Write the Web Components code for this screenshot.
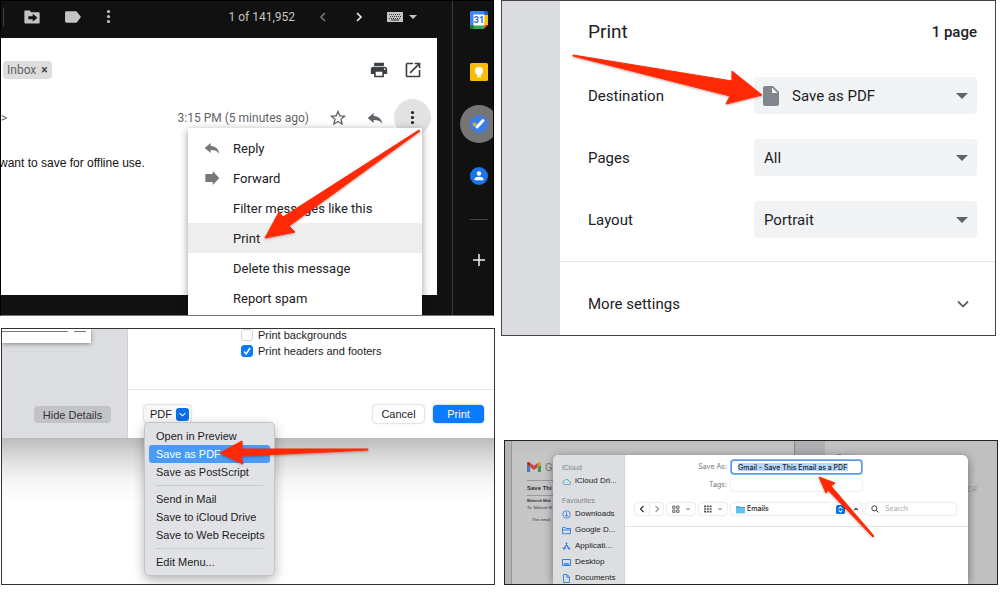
<!DOCTYPE html>
<html lang="en">
<head>
<meta charset="utf-8">
<title>Save a Gmail message as PDF</title>
<style>
body { margin: 0; background: #fff; font-family: Roboto, "Liberation Sans", sans-serif; }
</style>
</head>
<body>
<step-collage>
  <gmail-step slot="left"></gmail-step>
  <mac-print-step slot="left"></mac-print-step>
  <chrome-print-step slot="right"></chrome-print-step>
  <save-dialog-step slot="right"></save-dialog-step>
</step-collage>

<script>
const RESET = `
  :host { box-sizing: border-box; }
  *, *::before, *::after { box-sizing: border-box; }
  button { font: inherit; color: inherit; background: none; border: 0; padding: 0; margin: 0; display: inline-flex; align-items: center; }
  h2, h3, p, ul { margin: 0; padding: 0; font: inherit; list-style: none; }
`;
function define(tag, html, ready) {
  const template = document.createElement('template');
  template.innerHTML = `<style>${RESET}</style>` + html;
  customElements.define(tag, class extends HTMLElement {
    constructor() {
      super();
      this.attachShadow({ mode: 'open' }).append(template.content.cloneNode(true));
    }
    connectedCallback() { if (ready) ready(this, this.shadowRoot); }
  });
}

/* Icons: [viewBox, markup] */
const ICONS = {
  moveTo: ['1 1 22 22', '<path fill="currentColor" fill-rule="evenodd" d="M2.500 3H9l2 2.500h10A1.500 1.500 0 0 1 22.500 7v12.500A1.500 1.500 0 0 1 21 21H3a1.500 1.500 0 0 1-1.500-1.500V4a1 1 0 0 1 1-1zM13 18.500l6.500-5.500L13 7.500V11H7v4h6z"/>'],
  label: ['0 0 24 24', '<path fill="currentColor" d="M2 3.500h14.500c.700 0 1.300.300 1.700.900l5.700 7.600-5.700 7.600c-.400.600-1 .900-1.700.900H2c-1 0-1.900-.800-1.900-1.800V5.300C.1 4.300 1 3.500 2 3.500z"/>'],
  dots: ['0 0 8 24', '<g fill="currentColor"><circle cx="4" cy="4" r="2.500"/><circle cx="4" cy="12" r="2.500"/><circle cx="4" cy="20" r="2.500"/></g>'],
  left: ['0 0 16 16', '<path fill="none" stroke="currentColor" stroke-width="1.600" d="M10 4 6 8l4 4"/>'],
  right: ['0 0 16 16', '<path fill="none" stroke="currentColor" stroke-width="1.600" d="m6 4 4 4-4 4"/>'],
  down: ['0 0 16 16', '<path fill="none" stroke="currentColor" stroke-width="1.800" d="m3 5.500 5 5 5-5"/>'],
  up: ['0 0 16 16', '<path fill="none" stroke="currentColor" stroke-width="3" d="m3 11 5-5 5 5"/>'],
  keyboard: ['0 0 16 10', '<rect width="16" height="10" rx=".5" fill="currentColor"/><path stroke="#333" stroke-width="1" stroke-dasharray="1 1" d="M2 2.500h12M3 4.500h11M2 6.500h12"/><path stroke="#333" d="M4 8h8"/>'],
  caret: ['0 0 12 6', '<path fill="currentColor" d="M0 0h12L6 6z"/>'],
  printer: ['1 1 22 22', '<path fill="currentColor" d="M19 8H5c-1.660 0-3 1.340-3 3v6h4v4h12v-4h4v-6c0-1.660-1.340-3-3-3zm-3 11H8v-5h8v5zm3-7c-.550 0-1-.450-1-1s.450-1 1-1 1 .450 1 1-.450 1-1 1zm-1-9H6v4h12V3z"/>'],
  open: ['1 1 22 22', '<path fill="currentColor" d="M19 19H5V5h7V3H5a2 2 0 0 0-2 2v14a2 2 0 0 0 2 2h14c1.100 0 2-.900 2-2v-7h-2v7zM14 3v2h3.590l-9.830 9.830 1.410 1.410L19 6.410V10h2V3h-7z"/>'],
  star: ['1 1 22 22', '<path fill="currentColor" d="m22 9.240-7.190-.620L12 2 9.190 8.630 2 9.240l5.460 4.730L5.820 21 12 17.270 18.180 21l-1.630-7.030L22 9.240zM12 15.400l-3.760 2.270 1-4.280-3.320-2.880 4.380-.380L12 6.100l1.710 4.040 4.380.380-3.320 2.880 1 4.280L12 15.400z"/>'],
  reply: ['0 0 24 24', '<path fill="currentColor" d="M10 9V4.500L1 12l9 7.500V15c6 0 10 1.500 13 5.500C22 14 18 9.500 10 9z"/>'],
  forward: ['0 0 24 24', '<path fill="currentColor" d="M2 6h11V1.500L23 12 13 22.500V18H2z"/>'],
  plus: ['0 0 12 12', '<path stroke="currentColor" stroke-width="1.500" d="M6 0v12M0 6h12"/>'],
  calendar: ['0 0 18 18', '<path fill="#4285f4" d="M1.500 0H14v4H4v10H0V1.500A1.500 1.500 0 0 1 1.500 0z"/><path fill="#1967d2" d="M14 0h2.500A1.500 1.500 0 0 1 18 1.500V4h-4z"/><path fill="#fbbc04" d="M14 4h4v10h-4z"/><path fill="#34a853" d="M4 14h10v4H4z"/><path fill="#188038" d="M0 14h4v4H1.500A1.500 1.500 0 0 1 0 16.500z"/><path fill="#ea4335" d="M14 14h4l-4 4z"/><path fill="#fff" d="M3.500 3.500h11v11h-11z"/>'],
  keep: ['0 0 18 18', '<rect width="18" height="18" rx="1.500" fill="#fbbc04"/><circle cx="9" cy="8" r="4" fill="#fff"/><path fill="#fff" d="M7 11h4v1.500H7zM7 13h4v1.200H7z"/>'],
  tasks: ['0 0 18 18', '<circle cx="9" cy="9" r="9" fill="#3d7de8"/><path stroke="#fff" stroke-width="3" stroke-linecap="round" fill="none" d="m7 12 6-6.500"/><circle cx="4.500" cy="9.500" r="1.900" fill="#c9b34a"/>'],
  contacts: ['0 0 18 18', '<circle cx="9" cy="9" r="9" fill="#1a73e8"/><circle cx="9" cy="6.500" r="2.200" fill="#fff"/><path fill="#fff" d="M4.500 13.200v-1.200c0-1.500 2.500-2.300 4.500-2.300s4.500.800 4.500 2.300v1.200z"/>'],
  file: ['0 0 16 20', '<path fill="#80868b" fill-rule="evenodd" d="M2 0h8l6 6v12a2 2 0 0 1-2 2H2a2 2 0 0 1-2-2V2a2 2 0 0 1 2-2zm7 1.500V7h5.500z"/>'],
  gmail: ['0 0 24 18', '<path fill="#4c78c4" d="M1.600 18h3.900V8.700L0 4.600v11.800C0 17.300.700 18 1.600 18z"/><path fill="#3e955c" d="M18.500 18h3.900c.900 0 1.600-.700 1.600-1.600V4.600l-5.500 4.100z"/><path fill="#c8a33a" d="M18.500 1.600v7.100L24 4.600V2.500c0-2-2.300-3.200-3.900-2z"/><path fill="#c4473d" d="M5.500 8.700V1.600L12 6.500l6.500-4.900v7.100L12 13.600z"/><path fill="#a5352d" d="M0 2.500v2.100l5.500 4.100V1.600L3.900.5C2.300-.7 0 .500 0 2.500z"/>'],
  cloud: ['0 0 12 12', '<path fill="none" stroke="#35a0b8" d="M3.500 10a2.500 2.500 0 0 1-.300-4.900 3.200 3.200 0 0 1 6.100.700A2.100 2.100 0 0 1 9.500 10z"/>'],
  download: ['0 0 12 12', '<g fill="none" stroke="#2c7be5" stroke-width="1.100"><circle cx="6" cy="6" r="5"/><path d="M6 3v5.500M3.800 6.500 6 8.700l2.200-2.200"/></g>'],
  folder: ['0 0 12 12', '<path fill="none" stroke="#2c7be5" stroke-width="1.200" d="M.7 10.300V2h3.600l1 1.300h6v7zM.7 5.300h10.600"/>'],
  apps: ['0 0 12 12', '<path fill="none" stroke="#2c7be5" stroke-width="1.500" d="M6.800 1 2.300 10.500M5.200 1l4.500 9.500M.5 8h5M7.500 8h4"/>'],
  desktop: ['0 0 12 12', '<path fill="none" stroke="#2c7be5" stroke-width="1.300" d="M.7 2h10.600v8H.7z"/><path fill="#2c7be5" d="M2.500 7h7v2h-7z"/>'],
  doc: ['0 0 12 12', '<path fill="none" stroke="#2c7be5" stroke-width="1.200" d="M2 .7h4.800L10 4v7.300H2zM6.500 1v3.300H10"/>'],
  grid4: ['0 0 12 12', '<g fill="none" stroke="#555" stroke-width="1.300"><path d="M1 1.500h3.500V5H1zM7 1.500h3.500V5H7zM1 7.500h3.500V11H1zM7 7.500h3.500V11H7z"/></g>'],
  grid9: ['0 0 12 12', '<path stroke="#555" stroke-width="2.600" stroke-dasharray="3 1.200" d="M0 2h12M0 6h12M0 10h12"/>'],
  blueFolder: ['0 0 12 12', '<path fill="#3fa9dd" d="M0 1.500h4.500l1 1.200H12V11H0z"/><path fill="#63c3ee" d="M0 4h12v7H0z"/>'],
  updown: ['0 0 12 12', '<rect width="12" height="12" rx="2.500" fill="#0a6fe8"/><path fill="none" stroke="#fff" stroke-width="1.400" d="M3.500 5 6 2.500 8.500 5M3.500 7 6 9.500 8.500 7"/>'],
  search: ['0 0 12 12', '<path fill="none" stroke="#333" stroke-width="1.400" d="m7.800 7.800 3.500 3.500"/><circle cx="5" cy="5" r="3.800" fill="none" stroke="#333" stroke-width="1.400"/>']
};
define('ui-icon', `<style>:host { display: inline-flex; flex: none; } svg { display: block; width: 100%; }</style>`, (el, root) => {
  const [box, art] = ICONS[el.getAttribute('name')];
  el.style.width = (el.getAttribute('size') || 16) + 'px';
  root.innerHTML += `<svg viewBox="${box}" aria-hidden="true">${art}</svg>`;
});

/* Red annotation arrow, drawn over the panel it belongs to */
define('red-arrow', `<style>:host { position: absolute; z-index: 5; pointer-events: none; } svg { display: block; filter: drop-shadow(0 1px 1px rgba(90,0,0,.35)); }</style>`, (el, root) => {
  const [w, h] = el.getAttribute('box').split(' ');
  root.innerHTML += `<svg width="${w}" height="${h}" viewBox="0 0 ${w} ${h}" aria-hidden="true"><polygon fill="#ff2a05" stroke="#ff2a05" stroke-linejoin="round" points="${el.getAttribute('points')}"/></svg>`;
});

define('step-collage', `<style>
  :host { display: grid; grid-template-columns: 495fr 497fr; column-gap: 6px; padding-right: 2px; }
  .col { display: flex; flex-direction: column; min-width: 0; }
  .left { gap: 12px; }
  .right { gap: 24px; justify-content: space-between; }
</style>
<div class="col left"><slot name="left"></slot></div>
<div class="col right"><slot name="right"></slot></div>`);

define('gmail-step', `<style>
  :host { display: flex; margin-right: 1px; background: #111; border: 1px solid #000; border-bottom-color: #777; overflow: hidden; font-size: 12px; }
  .main { flex: 1; min-width: 0; position: relative; display: flex; flex-direction: column; padding: 0 15px 20px 0; }
  .bar { display: flex; align-items: center; height: 37px; padding: 0 20px 6px 2px; color: #c4c4c4; }
  .tools { display: flex; align-items: center; gap: 25px; border-left: 1px solid #444; padding-left: 20px; height: 18px; flex: 1; }
  .pager { display: flex; align-items: center; gap: 20px; }
  .pager button { gap: 6px; } .dim { color: #777; } .lit { color: #eee; }
  .card { background: #fff; padding: 23px 0 124px; color: #5f6368; }
  .row { display: flex; align-items: center; }
  .top { justify-content: space-between; padding: 0 15px 0 2px; color: #3c4043; }
  .chip { background: #ddd; color: #666; border-radius: 4px; padding: 0 4px; line-height: 18px; gap: 5px; }
  .chip b { color: #444; }
  .acts { display: flex; gap: 16px; }
  .meta { justify-content: space-between; padding: 0 6px 0 0; margin: 20px 0 19px; }
  .meta .row { gap: 20px; }
  .meta .row > :last-child { margin-left: -9px; }
  .more { width: 37px; height: 37px; border-radius: 50%; background: #e2e2e2; justify-content: center; color: #222; }
  .msg { font: 12px/16px "Liberation Sans", sans-serif; color: #111; text-indent: -2px; }
  .menu { position: absolute; right: 30px; top: 127px; width: 234px; padding: 5px 0 7px; background: #fff; color: #202124; font-size: 13px; box-shadow: 0 2px 8px rgba(0,0,0,.4); }
  .menu button { width: 100%; height: 30px; padding-left: 16px; gap: 13px; color: #202124; }
  .menu ui-icon { color: #777; }
  .menu .text { padding-left: 45px; }
  .menu .on { background: #eee; }
  aside { flex: none; display: flex; flex-direction: column; align-items: center; gap: 34px; width: 41px; padding: 10px 5px 0 17px; border-left: 1px solid #3a3a3a; color: #eee; }
  .cal { display: grid; place-items: center; color: #2c6de0; font-size: 9px; font-weight: 700; }
  .cal > * { grid-area: 1 / 1; }
  .tasks { border-radius: 50%; background: #757575; box-shadow: 0 0 0 10px #757575; }
  hr { width: 18px; border: 0; border-top: 1px solid #444; margin: 0; }
</style>
<div class="main">
  <div class="bar">
    <div class="tools">
      <button aria-label="Move to"><ui-icon name="moveTo"></ui-icon></button>
      <button aria-label="Labels"><ui-icon name="label"></ui-icon></button>
      <button aria-label="More"><ui-icon name="dots" size="5"></ui-icon></button>
    </div>
    <div class="pager"><span>1 of 141,952</span>
      <button class="dim" aria-label="Newer"><ui-icon name="left"></ui-icon></button>
      <button class="lit" aria-label="Older"><ui-icon name="right"></ui-icon></button>
      <button aria-label="Input tools"><ui-icon name="keyboard"></ui-icon><ui-icon name="caret" size="8"></ui-icon></button>
    </div>
  </div>
  <div class="card">
    <div class="row top"><button class="chip">Inbox <b>×</b></button>
      <div class="acts"><button aria-label="Print all"><ui-icon name="printer" size="18"></ui-icon></button><button aria-label="In new window"><ui-icon name="open" size="18"></ui-icon></button></div></div>
    <div class="row meta"><span>&gt;</span>
      <div class="row"><span>3:15 PM (5 minutes ago)</span>
        <button aria-label="Star"><ui-icon name="star" size="18"></ui-icon></button>
        <button aria-label="Reply"><ui-icon name="reply"></ui-icon></button>
        <button class="more" aria-label="More options"><ui-icon name="dots" size="5"></ui-icon></button></div></div>
    <p class="msg">want to save for offline use.</p>
  </div>
  <div class="menu">
    <button><ui-icon name="reply"></ui-icon>Reply</button>
    <button><ui-icon name="forward"></ui-icon>Forward</button>
    <button class="text">Filter messages like this</button>
    <button class="text on">Print</button>
    <button class="text">Delete this message</button>
    <button class="text">Report spam</button>
    <red-arrow style="left:72px;top:-3px" box="165 115" points="159,5 23,92 19,87 5,113 35,107 29,101 160,6"></red-arrow>
  </div>
</div>
<aside>
  <button class="cal" aria-label="Calendar"><ui-icon name="calendar" size="18"></ui-icon><span>31</span></button>
  <button aria-label="Keep"><ui-icon name="keep" size="18"></ui-icon></button>
  <button class="tasks" aria-label="Tasks"><ui-icon name="tasks" size="18"></ui-icon></button>
  <button aria-label="Contacts"><ui-icon name="contacts" size="18"></ui-icon></button>
  <hr>
  <button aria-label="Get add-ons"><ui-icon name="plus" size="12"></ui-icon></button>
</aside>`);

define('chrome-print-step', `<style>
  :host { display: grid; grid-template-columns: 58px 1fr; margin-right: 2px; border: 1px solid #444; font-size: 15px; line-height: 20px; color: #202124; background: #fff; }
  .strip { background: #dadce0; }
  .fields { display: flex; flex-direction: column; gap: 25px; padding: 20px 18px 23px 28px; border-bottom: 1px solid #e3e4e6; }
  header { display: flex; justify-content: space-between; align-items: center; line-height: 22px; margin-bottom: 9px; }
  h2 { font-size: 19px; } header b { font-weight: 500; }
  .field { display: flex; justify-content: space-between; align-items: center; }
  .box { position: relative; flex: 0 0 223px; display: flex; align-items: center; }
  select { appearance: none; width: 100%; height: 37px; border: 0; border-radius: 4px; background: #f1f3f4; font: inherit; color: inherit; padding: 0 30px 0 10px; }
  .icon select { padding-left: 38px; }
  .caret { position: absolute; right: 9px; color: #5f6368; }
  .file { position: absolute; left: 9px; }
  .more { display: flex; justify-content: space-between; width: 100%; padding: 32px 24px 21px 28px; color: #202124; }
  .more ui-icon { color: #5f6368; }
</style>
<div class="strip"></div>
<div>
  <div class="fields">
    <header><h2>Print</h2><b>1 page</b></header>
    <div class="field"><label for="dest">Destination</label><div class="box icon"><select id="dest"><option>Save as PDF</option></select><ui-icon class="file" name="file"></ui-icon><ui-icon class="caret" name="caret" size="12"></ui-icon>
      <red-arrow style="left:-186px;top:-28px" box="200 60" points="5,6 164,32 164,22 194,46 158,55 162,47 5,7"></red-arrow></div></div>
    <div class="field"><label for="pages">Pages</label><div class="box"><select id="pages"><option>All</option></select><ui-icon class="caret" name="caret" size="12"></ui-icon></div></div>
    <div class="field"><label for="layout">Layout</label><div class="box"><select id="layout"><option>Portrait</option></select><ui-icon class="caret" name="caret" size="12"></ui-icon></div></div>
  </div>
  <button class="more">More settings <ui-icon name="down"></ui-icon></button>
</div>`);

define('mac-print-step', `<style>
  :host { display: block; margin-left: 1px; border: 1px solid #333; overflow: hidden; font: 11px/16px "Liberation Sans", sans-serif; color: #1c1c1e; background: #fff; }
  .dialog { display: grid; grid-template-columns: 126px 1fr; background: #fff; border-bottom: 1px solid #bbb; }
  .side { display: flex; flex-direction: column; justify-content: space-between; align-items: flex-start; background: #dcdde0; border-right: 1px solid #d0d0d3; padding-bottom: 15px; }
  .paper { width: 89px; height: 14px; background: #fff; box-shadow: 0 1px 4px rgba(0,0,0,.4); }
  .paper i { display: block; height: 1px; margin: 2px 5px 0 0; background: linear-gradient(90deg, #777 66px, transparent 66px 72px, #777 72px); }
  .hide { margin-left: 32px; width: 77px; height: 17px; justify-content: center; border-radius: 4px; background: #c2c3c6; color: #333; }
  .checks { padding: 0 0 30px 113px; border-bottom: 1px solid #e2e2e2; }
  .checks label { display: flex; align-items: center; gap: 5px; }
  .checks label:first-child { margin-top: -2px; }
  input { appearance: none; width: 12px; height: 12px; margin: 0; border: 1px solid #d2d2d2; border-radius: 3px; background: #fff; }
  input:checked { border-color: #0a7aff; background: #0a7aff url("data:image/svg+xml,%3Csvg xmlns='http://www.w3.org/2000/svg' viewBox='0 0 10 10'%3E%3Cpath d='M2 5.500 4.200 8 8 2' fill='none' stroke='white' stroke-width='1.600'/%3E%3C/svg%3E"); }
  footer { display: flex; align-items: center; justify-content: space-between; padding: 15px 10px 15px 16px; }
  .end { display: flex; gap: 9px; }
  .btn { height: 18px; justify-content: center; border-radius: 4px; box-shadow: 0 0 2px rgba(0,0,0,.4); background: #fff; width: 51px; color: #1c1c1e; }
  .blue { background: #0a7aff; color: #fff; }
  .pop { position: relative; }
  .pop > .btn { width: 47px; justify-content: space-between; padding: 0 2px 0 6px; background: #f8f8f8; }
  .pop i { display: grid; place-items: center; width: 13px; height: 13px; border-radius: 3px; background: #0a6fe8; color: #fff; }
  .menu { position: absolute; z-index: 2; left: 0; top: 17px; width: 131px; padding: 4px; border: 1px solid #c4c5c8; border-radius: 5px; background: #e1e2e5; box-shadow: 0 4px 12px rgba(0,0,0,.3); }
  .menu button { display: block; text-align: left; width: 100%; height: 18px; padding: 0 7px; border-radius: 3px; white-space: nowrap; color: #1c1c1e; }
  .menu .on { background: #4a9af8; color: #fff; }
  hr { margin: 4px 7px; border: 0; border-top: 1px solid #c9cacd; }
  .under { height: 145px; background: linear-gradient(#bdbdbd, #e0e0e0 22px, #f7f7f7 44px, #fff 64px); }
</style>
<div class="dialog">
  <div class="side"><div class="paper"><i></i></div><button class="hide">Hide Details</button></div>
  <div>
    <div class="checks">
      <label><input type="checkbox"> Print backgrounds</label>
      <label><input type="checkbox" checked> Print headers and footers</label>
    </div>
    <footer>
      <div class="pop"><button class="btn">PDF <i><ui-icon name="down" size="9"></ui-icon></i></button>
        <div class="menu">
          <button>Open in Preview</button>
          <button class="on">Save as PDF</button>
          <button>Save as PostScript</button>
          <hr>
          <button>Send in Mail</button>
          <button>Save to iCloud Drive</button>
          <button>Save to Web Receipts</button>
          <hr>
          <button>Edit Menu...</button>
          <red-arrow style="left:70px;top:14px" box="158 32" points="5,16 27,4 27,12 153,12 153,13 26,19 28,27"></red-arrow>
        </div></div>
      <div class="end"><button class="btn">Cancel</button><button class="btn blue">Print</button></div>
    </footer>
  </div>
</div>
<div class="under"></div>`);

define('save-dialog-step', `<style>
  :host { display: grid; margin-left: 3px; border: 1px solid #222; overflow: hidden; font: 8px/12px Inter, sans-serif; color: #333; background: #c6c6c7; }
  .back, .dialog { grid-area: 1 / 1; min-width: 0; }
  .back { display: grid; grid-template-columns: 7px 1fr 31px 172px; }
  .edge { background: #b4b4b5; border-right: 1px solid #999; }
  .mail { padding: 20px 0 0 15px; font-size: 5px; line-height: 7px; white-space: nowrap; overflow: hidden; background: linear-gradient(#bfbfc0, #c6c6c7 14px); }
  .brand { display: flex; align-items: center; gap: 4px; font-size: 10px; line-height: 12px; color: #777; padding-bottom: 7px; border-bottom: 1px solid #999; }
  .mail h3 { font: 700 6px/14px "Liberation Sans", sans-serif; border-bottom: 1px solid #999; margin-bottom: 1px; }
  .mail p { font-family: "Liberation Sans", sans-serif; font-size: 4px; }
  .mail p:last-child { padding: 5px 0 0 5px; }
  .gap { background: #aeafb2; border-left: 1px solid #888; }
  .print { background: #c0c0c1; padding: 10px 0 0 12px; display: flex; flex-direction: column; color: #777; }
  .print p:last-child { padding: 20px 19px 0 0; text-align: right; color: #999; }
  .dialog { margin: 14px 29px 0 48px; display: grid; grid-template-columns: 72px 1fr; border-radius: 6px 6px 0 0; overflow: hidden; background: #fff; z-index: 1; }
  .shade { grid-area: 1 / 1; margin: 14px 29px 0 48px; border-radius: 6px; box-shadow: 0 2px 10px rgba(0,0,0,.45); }
  nav { background: #dcdee1; padding: 8px 0 0 9px; border-right: 1px solid #d2d3d6; font-family: "Liberation Sans", sans-serif; }
  nav h3 { font-size: 7px; line-height: 10px; color: #808186; padding-bottom: 2px; }
  nav ul { display: flex; flex-direction: column; gap: 4px; margin-bottom: 9px; }
  nav ul:last-child { margin-bottom: 0; }
  nav a { display: flex; align-items: center; gap: 4px; height: 12px; color: #222; text-decoration: none; white-space: nowrap; }
  .form { display: grid; grid-template-columns: 102px 131px; column-gap: 4px; row-gap: 5px; padding: 5px 0 12px; align-items: center; font-size: 7px; }
  .form label { text-align: right; color: #777; }
  .name { position: relative; display: flex; }
  input { appearance: none; font: inherit; width: 100%; min-width: 0; margin: 0; border: 0; outline: 0; color: #222; }
  #name { height: 14px; padding: 2px 13px 2px 6px; border: 1px solid #5b96e8; border-radius: 3px; box-shadow: 0 0 0 1px #86b4f0; background: #b3d7ff content-box; font-weight: 500; }
  #tags { height: 12px; border-radius: 3px; box-shadow: 0 0 2px rgba(0,0,0,.2); }
  .bar { display: flex; gap: 4px; padding: 0 12px 11px 10px; border-bottom: 1px solid #e3e3e3; }
  .bar > * { display: flex; align-items: center; height: 12px; border-radius: 3px; box-shadow: 0 0 2px rgba(0,0,0,.25); background: #fff; }
  .nav button { width: 14px; justify-content: center; color: #333; }
  .nav button + button { border-left: 1px solid #e5e5e5; color: #999; }
  .view { width: 28px; padding: 0 4px 0 5px; justify-content: space-between; color: #333; }
  .place { flex: 1 1 114px; padding: 0 0 0 5px; gap: 2px; }
  select { appearance: none; flex: 1; min-width: 0; border: 0; padding: 0; background: none; font: inherit; font-size: 7px; color: #222; font-weight: 500; }
  .upb { width: 12px; justify-content: center; color: #333; margin-left: 1px; }
  .find { flex: 1 1 90px; padding-left: 5px; gap: 4px; }
  .find input { background: none; font-size: 7px; } .find input::placeholder { color: #aaa; }
</style>
<div class="back">
  <div class="edge"></div>
  <div class="mail">
    <div class="brand"><ui-icon name="gmail" size="14"></ui-icon>G</div>
    <h3>Save Thi</h3>
    <p><b>Mahesh Mak</b></p><p>To: Mahesh M</p><p>This email</p>
  </div>
  <div class="gap"></div>
  <div class="print"><p>Print</p><p>DF</p></div>
</div>
<div class="shade"></div>
<div class="dialog">
  <nav>
    <h3>iCloud</h3>
    <ul><li><a href="#"><ui-icon name="cloud" size="9"></ui-icon>iCloud Dri...</a></li></ul>
    <h3>Favourites</h3>
    <ul>
      <li><a href="#"><ui-icon name="download" size="9"></ui-icon>Downloads</a></li>
      <li><a href="#"><ui-icon name="folder" size="9"></ui-icon>Google D...</a></li>
      <li><a href="#"><ui-icon name="apps" size="9"></ui-icon>Applicati...</a></li>
      <li><a href="#"><ui-icon name="desktop" size="9"></ui-icon>Desktop</a></li>
      <li><a href="#"><ui-icon name="doc" size="9"></ui-icon>Documents</a></li>
    </ul>
  </nav>
  <div>
    <div class="form">
      <label for="name">Save As:</label>
      <div class="name"><input id="name" value="Gmail - Save This Email as a PDF"><red-arrow style="left:83px;top:12px" box="64 69" points="5,5 21,11 17,14 60,64 59,65 14,18 12,21"></red-arrow></div>
      <label for="tags">Tags:</label><input id="tags">
    </div>
    <div class="bar">
      <div class="nav"><button aria-label="Back"><ui-icon name="left" size="12"></ui-icon></button><button aria-label="Forward"><ui-icon name="right" size="12"></ui-icon></button></div>
      <button class="view" aria-label="Icon view"><ui-icon name="grid4" size="8"></ui-icon><ui-icon name="down" size="6"></ui-icon></button>
      <button class="view" aria-label="Group"><ui-icon name="grid9" size="8"></ui-icon><ui-icon name="down" size="6"></ui-icon></button>
      <div class="place"><ui-icon name="blueFolder" size="9"></ui-icon><select aria-label="Folder"><option>Emails</option></select><ui-icon name="updown" size="9"></ui-icon></div>
      <button class="upb" aria-label="Collapse"><ui-icon name="up" size="6"></ui-icon></button>
      <div class="find"><ui-icon name="search" size="8"></ui-icon><input type="search" aria-label="Search" placeholder="Search"></div>
    </div>
  </div>
</div>`);
</script>
</body>
</html>
